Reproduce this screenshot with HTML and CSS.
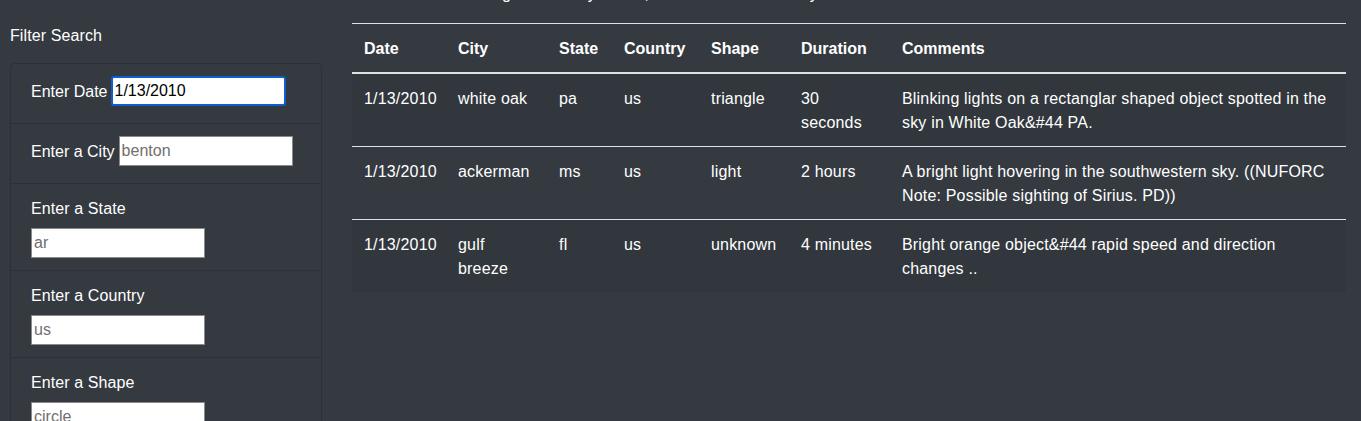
FILE: index.html
```html
<!DOCTYPE html>
<html lang="en">
<head>
<meta charset="utf-8">
<title>UFO Sightings</title>
<link rel="stylesheet" href="styles.css">
</head>
<body>
<p class="intro">through the data yourself, and let us know what you see.</p>
<div class="layout">
  <aside class="filters">
    <div class="filters-title">Filter Search</div>
    <ul class="filter-list">
      <li class="filter-item inline">
        <label class="filter-label" for="date">Enter Date</label>
        <input class="filter-input focused" id="date" type="text" value="1/13/2010">
      </li>
      <li class="filter-item inline">
        <label class="filter-label" for="city">Enter a City</label>
        <input class="filter-input" id="city" type="text" placeholder="benton">
      </li>
      <li class="filter-item stacked">
        <label class="filter-label" for="state">Enter a State</label>
        <input class="filter-input" id="state" type="text" placeholder="ar">
      </li>
      <li class="filter-item stacked">
        <label class="filter-label" for="country">Enter a Country</label>
        <input class="filter-input" id="country" type="text" placeholder="us">
      </li>
      <li class="filter-item stacked">
        <label class="filter-label" for="shape">Enter a Shape</label>
        <input class="filter-input" id="shape" type="text" placeholder="circle">
      </li>
    </ul>
  </aside>
  <main class="results">
    <table class="ufo-table">
      <colgroup>
        <col class="c-date"><col class="c-city"><col class="c-state"><col class="c-country"><col class="c-shape"><col class="c-duration"><col class="c-comments">
      </colgroup>
      <thead>
        <tr><th>Date</th><th>City</th><th>State</th><th>Country</th><th>Shape</th><th>Duration</th><th>Comments</th></tr>
      </thead>
      <tbody>
        <tr><td>1/13/2010</td><td>white oak</td><td>pa</td><td>us</td><td>triangle</td><td>30 seconds</td><td>Blinking lights on a rectanglar shaped object spotted in the sky in White Oak&amp;#44 PA.</td></tr>
        <tr><td>1/13/2010</td><td>ackerman</td><td>ms</td><td>us</td><td>light</td><td>2 hours</td><td>A bright light hovering in the southwestern sky. ((NUFORC Note: Possible sighting of Sirius. PD))</td></tr>
        <tr><td>1/13/2010</td><td>gulf breeze</td><td>fl</td><td>us</td><td>unknown</td><td>4 minutes</td><td>Bright orange object&amp;#44 rapid speed and direction changes ..</td></tr>
      </tbody>
    </table>
  </main>
</div>
</body>
</html>
```
FILE: styles.css
```css
html, body {
  margin: 0;
  padding: 0;
  background: #343a40;
  color: #ffffff;
  font-family: "Liberation Sans", Arial, sans-serif;
  font-size: 16px;
  line-height: 24px;
  overflow: hidden;
}

.intro {
  margin: -18px 0 17px 0;
  padding-right: 25px;
  text-align: center;
  letter-spacing: 0.1px;
}

.layout {
  display: flex;
  gap: 30px;
  padding: 0 15px 0 10px;
}

.filters {
  width: 312px;
  flex: none;
}

.filters-title {
  padding-top: 1px;
  margin-bottom: 15px;
  letter-spacing: 0.1px;
}

.filter-list {
  list-style: none;
  margin: 0;
  padding: 0;
  border: 1px solid rgba(0, 0, 0, 0.14);
  border-radius: 4px;
}

.filter-item {
  padding: 12px 20px;
  border-top: 1px solid rgba(0, 0, 0, 0.14);
}

.filter-item:first-child {
  border-top: none;
}

.filter-item.inline {
  display: flex;
  align-items: center;
  gap: 4px;
  padding-bottom: 17px;
}

.filter-item.inline .filter-label {
  padding-top: 2px;
  letter-spacing: 0;
}

.filter-item.stacked {
  display: flex;
  flex-direction: column;
  align-items: flex-start;
}

.filter-item.stacked .filter-label {
  padding-top: 1px;
  margin-bottom: 7px;
}

.filter-label {
  display: block;
  white-space: nowrap;
  letter-spacing: 0.1px;
}

.filter-input {
  box-sizing: border-box;
  width: 174px;
  height: 30px;
  margin: 0;
  padding: 1px 2px;
  border: 1px solid #8a8a8a;
  border-radius: 0;
  background: #ffffff;
  color: #000000;
  font-family: "Liberation Sans", Arial, sans-serif;
  font-size: 16px;
  outline: none;
}

.filter-input::placeholder {
  color: #6f6f6f;
}

.filter-input.focused {
  width: 175px;
  border: 2px solid #0b5fd3;
  border-radius: 3px;
  padding: 0 1px;
}

.results {
  flex: 1;
  min-width: 0;
}

.ufo-table {
  width: 100%;
  border-collapse: collapse;
  table-layout: fixed;
  color: #ffffff;
}

.c-date { width: 94px; }
.c-city { width: 101px; }
.c-state { width: 65px; }
.c-country { width: 87px; }
.c-shape { width: 90px; }
.c-duration { width: 101px; }
.c-comments { width: auto; }

.ufo-table th,
.ufo-table td {
  padding: 13px 12px 11px 12px;
  text-align: left;
  vertical-align: top;
  border-top: 1px solid #dee2e6;
}

.ufo-table td {
  letter-spacing: 0.18px;
}

.ufo-table th {
  font-weight: bold;
  border-bottom: 2px solid #dee2e6;
}

.ufo-table tbody tr:first-child td {
  border-top: none;
}

.ufo-table tbody tr:nth-child(odd) {
  background: rgba(0, 0, 0, 0.05);
}
```
